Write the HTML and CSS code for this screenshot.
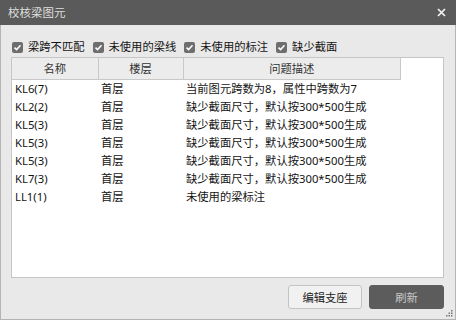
FILE: index.html
```html
<!DOCTYPE html>
<html lang="zh-CN">
<head>
    <meta charset="UTF-8">
    <title>校核梁图元</title>
    <link rel="stylesheet" href="styles.css">
</head>
<body>
    <div class="window">
        <div class="titlebar">
            <span class="title">校核梁图元</span>
            <svg class="close" width="9" height="9" viewBox="0 0 9 9">
                <path d="M1 1 L8 8 M8 1 L1 8" stroke="#f2f2f2" stroke-width="1.7"/>
            </svg>
        </div>

        <div class="content">
            <div class="filters">
                <label class="check"><span class="box"><svg width="9" height="9" viewBox="0 0 9 9"><path d="M1.5 4.6 L3.6 6.6 L7.5 2.3" fill="none" stroke="#fff" stroke-width="1.5"/></svg></span>梁跨不匹配</label>
                <label class="check"><span class="box"><svg width="9" height="9" viewBox="0 0 9 9"><path d="M1.5 4.6 L3.6 6.6 L7.5 2.3" fill="none" stroke="#fff" stroke-width="1.5"/></svg></span>未使用的梁线</label>
                <label class="check"><span class="box"><svg width="9" height="9" viewBox="0 0 9 9"><path d="M1.5 4.6 L3.6 6.6 L7.5 2.3" fill="none" stroke="#fff" stroke-width="1.5"/></svg></span>未使用的标注</label>
                <label class="check"><span class="box"><svg width="9" height="9" viewBox="0 0 9 9"><path d="M1.5 4.6 L3.6 6.6 L7.5 2.3" fill="none" stroke="#fff" stroke-width="1.5"/></svg></span>缺少截面</label>
            </div>

            <div class="list">
                <table>
                    <thead>
                        <tr>
                            <th class="col-name">名称</th>
                            <th class="col-floor">楼层</th>
                            <th class="col-desc">问题描述</th>
                        </tr>
                    </thead>
                    <tbody>
                        <tr><td>KL6(7)</td><td>首层</td><td>当前图元跨数为8，属性中跨数为7</td></tr>
                        <tr><td>KL2(2)</td><td>首层</td><td>缺少截面尺寸，默认按300*500生成</td></tr>
                        <tr><td>KL5(3)</td><td>首层</td><td>缺少截面尺寸，默认按300*500生成</td></tr>
                        <tr><td>KL5(3)</td><td>首层</td><td>缺少截面尺寸，默认按300*500生成</td></tr>
                        <tr><td>KL5(3)</td><td>首层</td><td>缺少截面尺寸，默认按300*500生成</td></tr>
                        <tr><td>KL7(3)</td><td>首层</td><td>缺少截面尺寸，默认按300*500生成</td></tr>
                        <tr><td>LL1(1)</td><td>首层</td><td>未使用的梁标注</td></tr>
                    </tbody>
                </table>
            </div>

            <div class="actions">
                <button class="btn">编辑支座</button>
                <button class="btn primary">刷新</button>
            </div>
        </div>

        <svg class="grip" width="7" height="7" viewBox="0 0 7 7">
            <rect x="5" y="0" width="1.5" height="1.5" fill="#777"/>
            <rect x="2.5" y="2.5" width="1.5" height="1.5" fill="#777"/>
            <rect x="5" y="2.5" width="1.5" height="1.5" fill="#777"/>
            <rect x="0" y="5" width="1.5" height="1.5" fill="#777"/>
            <rect x="2.5" y="5" width="1.5" height="1.5" fill="#777"/>
            <rect x="5" y="5" width="1.5" height="1.5" fill="#777"/>
        </svg>
    </div>
</body>
</html>
```

FILE: styles.css
```css
* {
    box-sizing: border-box;
}

body {
    margin: 0;
    font-family: "Noto Sans", "Noto Sans CJK SC", sans-serif;
    font-size: 11.3px;
    color: #141414;
    background: #e9e9e9;
}

.window {
    position: relative;
    width: 456px;
    height: 320px;
    background: #e9e9e9;
    border: 1px solid #b4b4b4;
    border-top: none;
}

.titlebar {
    height: 25px;
    margin: 0 -1px;
    background: #5a5a5a;
    color: #dedede;
    display: flex;
    align-items: center;
    justify-content: space-between;
    padding: 0 10px 0 8px;
}

.title {
    font-size: 11.5px;
    line-height: 14px;
}

.content {
    padding: 0 11px 0 10px;
}

.filters {
    display: flex;
    align-items: center;
    gap: 8px;
    padding: 12px 0 0 1px;
    height: 32px;
}

.check {
    display: flex;
    align-items: center;
    line-height: 14px;
}

.box {
    width: 11px;
    height: 11px;
    margin-right: 5px;
    background: #6e6e6e;
    border-radius: 2px;
    display: flex;
    align-items: center;
    justify-content: center;
}

.list {
    height: 221px;
    background: #fff;
    border: 1px solid #c6c6c6;
}

table {
    border-collapse: collapse;
    table-layout: fixed;
    width: 389px;
}

th {
    height: 21px;
    padding: 0;
    font-weight: normal;
    color: #333;
    background: #ececec;
    border-right: 1px solid #c9c9c9;
    border-bottom: 1px solid #c9c9c9;
    text-align: center;
}

.col-name {
    width: 86px;
}

.col-floor {
    width: 85px;
}

td {
    height: 18px;
    padding: 0 0 0 3px;
    white-space: nowrap;
    line-height: 18px;
}

.actions {
    display: flex;
    justify-content: flex-end;
    gap: 7px;
    padding-top: 7px;
}

.btn {
    width: 74px;
    height: 24px;
    font: inherit;
    color: #222;
    background: #f1f1f1;
    border: 1px solid #c4c4c4;
    border-radius: 3px;
}

.btn.primary {
    width: 75px;
    background: #5c5c5c;
    border-color: #5c5c5c;
    color: #c9c9c9;
}

.grip {
    position: absolute;
    right: 2px;
    bottom: 2px;
}
```
